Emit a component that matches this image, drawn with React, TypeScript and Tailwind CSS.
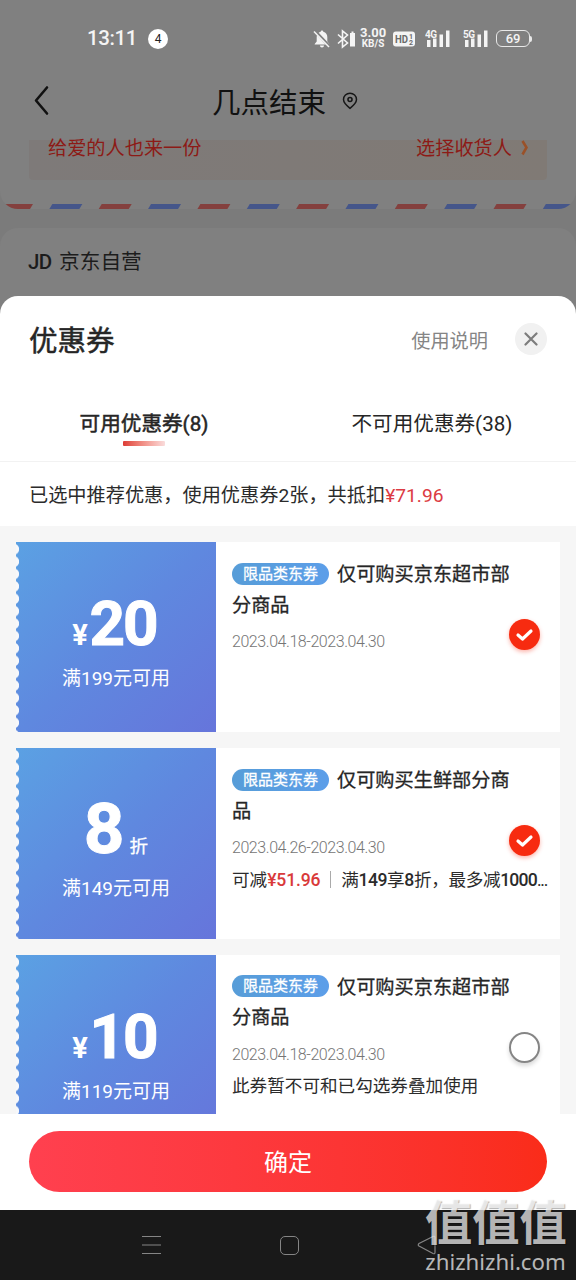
import React, { useState } from 'react';

interface Coupon {
  id: number;
  amount: string;
  kind: 'cash' | 'discount';
  condition: string;
  tag: string;
  title: [string, string];
  period: string;
  saved?: string;
  note?: React.ReactNode;
}

const coupons: Coupon[] = [
  {
    id: 1,
    amount: '20',
    kind: 'cash',
    condition: '满199元可用',
    tag: '限品类东券',
    title: ['仅可购买京东超市部', '分商品'],
    period: '2023.04.18-2023.04.30',
  },
  {
    id: 2,
    amount: '8',
    kind: 'discount',
    condition: '满149元可用',
    tag: '限品类东券',
    title: ['仅可购买生鲜部分商', '品'],
    period: '2023.04.26-2023.04.30',
    saved: '¥51.96',
    note: (
      <>
        满<b className="font-medium tracking-[-0.5px]">149</b>享<b className="font-medium">8</b>折，最多减
        <b className="font-medium tracking-[-0.8px]">1000</b>
        <span className="tracking-[-1.3px]">...</span>
      </>
    ),
  },
  {
    id: 3,
    amount: '10',
    kind: 'cash',
    condition: '满119元可用',
    tag: '限品类东券',
    title: ['仅可购买京东超市部', '分商品'],
    period: '2023.04.18-2023.04.30',
    note: '此券暂不可和已勾选券叠加使用',
  },
];

function Signal({ label }: { label: string }) {
  return (
    <svg width="25" height="20" viewBox="0 0 25 20" fill="#f4f4f4">
      <text x="0" y="8.500" fontSize="10" fontWeight="700" fontFamily="Roboto, sans-serif" textLength="12">
        {label}
      </text>
      <rect x="2" y="11" width="3.500" height="7" />
      <rect x="8" y="9.500" width="3.500" height="8.500" />
      <rect x="14.500" y="5.500" width="3.500" height="12.500" />
      <rect x="21" y="1.500" width="3.500" height="16.500" />
    </svg>
  );
}

function StatusBar() {
  return (
    <div className="flex h-[77px] items-center pl-[87px] text-[#f4f4f4]">
      <span className="text-[20.500px] font-medium tracking-[-0.4px]">13:11</span>
      <span className="ml-[11px] flex h-5 w-5 items-center justify-center rounded-full bg-white text-[12px] text-[#222]">
        4
      </span>
      <div className="ml-[145px] flex items-center">
        <svg width="18" height="20" viewBox="0 0 18 20" fill="none">
          <path
            d="M9 1.500c.9 0 1.300.6 1.300 1.300C13 3.500 14.300 5.600 14.300 8v4.500l2 2.500v.6H1.700V15l2-2.500V8C3.700 5.600 5 3.500 7.700 2.800 7.700 2.100 8.100 1.500 9 1.500zM7 16.500h4c0 1.200-.8 2-2 2s-2-.8-2-2z"
            fill="#f4f4f4"
          />
          <path d="M2 2l15 16" stroke="#808080" strokeWidth="3" />
          <path d="M1 2.500l15 15.500" stroke="#f4f4f4" strokeWidth="1.500" />
        </svg>
        <svg className="ml-[6px]" width="19" height="20" viewBox="0 0 19 20" fill="none">
          <path d="M1 5.500l9.500 8.500-5 4V2l5 4L1 14.500" stroke="#f4f4f4" strokeWidth="1.600" />
          <path d="M13 4h1.500V2.500h2V4H18v13.500h-5z" fill="#f4f4f4" />
        </svg>
        <div className="ml-[3px] flex w-[28px] flex-col items-center font-bold">
          <span className="text-[13px] leading-[11px]">3.00</span>
          <span className="text-[10px] leading-[12px]">KB/S</span>
        </div>
        <svg className="ml-[6px]" width="22" height="16" viewBox="0 0 22 16">
          <rect width="22" height="15" y=".5" rx="3" fill="#f4f4f4" />
          <g fill="#6b6b6b" fontFamily="Roboto, sans-serif" fontWeight="700">
            <text x="2" y="12" fontSize="11.500" textLength="13" lengthAdjust="spacingAndGlyphs">HD</text>
            <text x="16" y="7.500" fontSize="7">1</text>
            <text x="16" y="14" fontSize="7">2</text>
          </g>
        </svg>
        <span className="ml-[10px]">
          <Signal label="4G" />
        </span>
        <span className="ml-[13px]">
          <Signal label="5G" />
        </span>
        <div className="ml-[8px] flex h-[17px] w-[34px] items-center justify-center rounded-[6px] border-[1.5px] border-[#e8e8e8] text-[13px] font-medium">
          69
        </div>
        <span className="h-[6px] w-[2px] rounded-r-full bg-[#e8e8e8]" />
      </div>
    </div>
  );
}

function AirmailBorder() {
  const dashes = Array.from({ length: 12 }, (_, i) => i);
  return (
    <svg className="block" width="576" height="5" viewBox="0 0 576 5">
      {dashes.map((i) => (
        <path
          key={i}
          d={`M${i * 49.35 + 3} 0h30l-3 5h-30z`}
          fill={i % 2 === 0 ? '#84403e' : '#45568a'}
        />
      ))}
    </svg>
  );
}

function OrderBackdrop() {
  return (
    <div className="h-[296px] bg-[#7b7b7b]">
      <div className="h-[209px] overflow-hidden rounded-b-[18px] bg-[#808080]">
        <StatusBar />
        <div className="flex h-[49px] items-center text-[#111]">
          <svg className="mt-[-1px] ml-[33px]" width="17" height="32" viewBox="0 0 17 32" fill="none">
            <path d="M14 2.500L3 15.500l11 13" stroke="#111" strokeWidth="2.600" strokeLinecap="round" strokeLinejoin="round" />
          </svg>
          <h1 className="mt-[5px] ml-[162px] text-[28.500px] leading-[40px]">几点结束</h1>
          <svg className="mt-[-1px] ml-[16px]" width="16" height="18" viewBox="0 0 16 18" fill="none" stroke="#161616">
            <path d="M8 16.300C4.500 13.500 1.500 10.800 1.500 7.500a6.500 6.300 0 0 1 13 0c0 3.300-3 6-6.500 8.800z" strokeWidth="1.500" />
            <circle cx="8" cy="7.500" r="2" strokeWidth="1.600" />
          </svg>
        </div>
        <div className="mx-[29px] mt-[14px] flex h-[40px] justify-between rounded-b-[4px] bg-linear-to-r from-[#7e7a79] to-[#807a75] pr-[18px] pl-[19px] text-[19.200px] leading-[18px] text-[#8d1a16]">
          <span>给爱的人也来一份</span>
          <span className="flex">
            选择收货人
            <svg className="ml-[9px]" width="8" height="16" viewBox="0 0 8 16" fill="none">
              <path d="M1.500 1l4 6.500-4 7" stroke="#9a5128" strokeWidth="2.600" />
            </svg>
          </span>
        </div>
        <div className="pt-[24px]">
          <AirmailBorder />
        </div>
      </div>
      <div className="mt-[19px] flex h-[68px] items-center rounded-t-[18px] bg-[#808080] pl-[28px] text-[#1c1c1c]">
        <span className="w-[31px] text-[20.500px] font-medium tracking-[-0.6px]">JD</span>
        <span className="pt-[2px] text-[20.700px]">京东自营</span>
      </div>
    </div>
  );
}

function CheckMark({ checked }: { checked: boolean }) {
  if (!checked) {
    return (
      <span className="block h-[31px] w-[31px] rounded-full border-[2.5px] border-[#858585] bg-white shadow-[0_3px_4px_rgba(0,0,0,0.15)]" />
    );
  }
  return (
    <span className="flex h-[31px] w-[31px] items-center justify-center rounded-full bg-[#f72b10] shadow-[0_2px_4px_rgba(247,43,16,0.35)]">
      <svg width="19" height="14" viewBox="0 0 19 14" fill="none">
        <path d="M3 7l4.500 4L16 3" stroke="#fff" strokeWidth="3.200" strokeLinecap="round" strokeLinejoin="round" />
      </svg>
    </span>
  );
}

function CouponCard({ coupon, checked, onToggle }: { coupon: Coupon; checked: boolean; onToggle: () => void }) {
  return (
    <div className="flex h-[190.300px] shrink-0 bg-white" onClick={onToggle}>
      <div className="relative w-[200px] shrink-0 bg-linear-[135deg,#5ba1e3_0%,#5f88df_50%,#6675db_100%] text-center text-white">
        <div className="absolute top-[1px] bottom-0 left-0 w-[4px] bg-[radial-gradient(circle_at_-2.500px_50%,#f7f8fb_5.200px,transparent_6px)] bg-size-[4px_12.400px]" />
        {coupon.kind === 'cash' ? (
          <div className="flex h-[103px] items-baseline justify-center pt-[49px] pr-[5px] font-bold">
            <span className="w-[19px] text-[29px] leading-none">¥</span>
            <span className="text-[62px] leading-[66px] tracking-[-2px] [-webkit-text-stroke:1px_white]">{coupon.amount}</span>
          </div>
        ) : (
          <div className="flex h-[107px] items-baseline justify-center pt-[44px]">
            <span className="text-[71px] leading-[74px] font-bold [-webkit-text-stroke:1px_white]">{coupon.amount}</span>
            <span className="ml-[5px] text-[18.500px] [-webkit-text-stroke:0.3px_white]">折</span>
          </div>
        )}
        <div className="mt-[22px] text-[19px] leading-[24px]">{coupon.condition}</div>
      </div>
      <div className="min-w-0 flex-1 pt-[17px] pl-[16px]">
        <div className="text-[19.200px] leading-[30.500px] whitespace-nowrap text-[#262626]">
          <div className="flex h-[30.500px] items-center">
            <span className="mt-[-1px] mr-[8px] flex h-[22px] w-[97px] items-center justify-center rounded-full bg-linear-to-r from-[#579dd8] to-[#5c9ee9] text-[15px] leading-[20px] text-white [-webkit-text-stroke:0.3px_white]">
              {coupon.tag}
            </span>
            <span className="mt-[2px] [-webkit-text-stroke:0.3px_#262626]">{coupon.title[0]}</span>
          </div>
          <div className="mt-[1px] [-webkit-text-stroke:0.3px_#262626]">{coupon.title[1]}</div>
        </div>
        <div className="mt-[9px] flex h-[24px] items-center justify-between pr-[20px]">
          <span className="text-[16px] font-light tracking-[-0.44px] text-[#757575]">{coupon.period}</span>
          <span className="mt-[-15px]">
            <CheckMark checked={checked} />
          </span>
        </div>
        {coupon.note && (
          <div className="mt-[7.500px] flex items-center text-[17.600px] leading-[24px] whitespace-nowrap text-[#2b2b2b]">
            {coupon.saved && (
              <>
                <span>可减</span>
                <span className="font-medium tracking-[-0.2px] text-[#d93a3a]">{coupon.saved}</span>
                <span className="mx-[10px] h-[17px] w-px bg-[#aaa]" />
              </>
            )}
            <span className={coupon.saved ? 'tracking-[-0.35px]' : ''}>{coupon.note}</span>
          </div>
        )}
      </div>
    </div>
  );
}

function SystemNav() {
  return (
    <div className="relative flex h-[70px] items-center justify-between bg-[#191919] pr-[139px] pl-[141px]">
      <svg width="21" height="20" viewBox="0 0 21 20" stroke="#858585" strokeWidth="1.200">
        <path d="M1 1.500h19M1 10h19M1 18.500h19" />
      </svg>
      <span className="h-[19px] w-[19px] rounded-[5px] border border-[#858585]" />
      <svg width="20" height="22" viewBox="0 0 20 22" fill="none" stroke="#858585" strokeWidth="1.200">
        <path d="M2 9.500Q.5 11 2 12l14 7.500q2 .8 2-1V3.500q0-1.800-2-1z" />
      </svg>
      {/* site watermark */}
      <div className="absolute right-[10px] bottom-[5px] w-[141px] text-white/70">
        <div className="pb-[1px] text-[47.300px] leading-[48px] font-bold whitespace-nowrap [text-shadow:1px_1px_1px_rgba(0,0,0,0.3)]">
          值值值
        </div>
        <div className="text-center font-['Noto_Sans'] text-[22.200px] leading-[26px] whitespace-nowrap">zhizhizhi.com</div>
      </div>
    </div>
  );
}

export default function App() {
  const [selected, setSelected] = useState<number[]>([1, 2]);
  const [tab, setTab] = useState(0);

  const toggle = (id: number) => {
    setSelected((prev) => (prev.includes(id) ? prev.filter((s) => s !== id) : [...prev, id]));
  };

  return (
    <div
      className="h-[1280px] w-[576px] overflow-hidden bg-[#7b7b7b] font-[Roboto,'Noto_Sans_CJK_SC',sans-serif]"
      lang="zh-CN"
    >
      <OrderBackdrop />
      <div className="bg-[#808080]">
        <div className="flex h-[914px] flex-col overflow-hidden rounded-t-[18px] bg-white">
          <div className="flex h-[88px] shrink-0 items-center pr-[29px] pl-[29px]">
            <h2 className="flex-1 pt-[4px] text-[28.500px] text-[#262626] [-webkit-text-stroke:0.500px_#262626]">优惠券</h2>
            <span className="pt-[4px] text-[19.200px] text-[#858585]">使用说明</span>
            <button className="mt-[-2px] ml-[27px] flex h-[32px] w-[32px] items-center justify-center rounded-full bg-[#f1f1f1]">
              <svg width="14" height="14" viewBox="0 0 14 14" stroke="#7d7d7d" strokeWidth="2.200" strokeLinecap="round">
                <path d="M1.500 1.500l11 11M12.500 1.500l-11 11" />
              </svg>
            </button>
          </div>

          <div className="flex h-[78px] shrink-0 border-b border-[#f2f2f2] text-[20.600px] text-[#262626]">
            {['可用优惠券(8)', '不可用优惠券(38)'].map((label, idx) => (
              <button key={idx} onClick={() => setTab(idx)} className="flex flex-1 flex-col items-center pt-[25px]">
                <span className={tab === idx ? 'leading-[30px] [-webkit-text-stroke:0.5px_#262626]' : 'leading-[30px]'}>
                  {label}
                </span>
                {tab === idx && (
                  <span className="mt-[2px] h-[5px] w-[42px] rounded-[1px] bg-linear-to-r from-[#dd3a35] to-[#f9dcdc]" />
                )}
              </button>
            ))}
          </div>

          <div className="h-[64px] shrink-0 pl-[29px] text-[19.200px] leading-[68px] text-[#2b2b2b]">
            已选中推荐优惠，使用优惠券2张，共抵扣<span className="text-[#dc3b43]">¥71.96</span>
          </div>

          <div className="flex h-[588px] shrink-0 flex-col gap-[16px] overflow-hidden bg-[#f6f6f6] px-[16px] pt-[16px]">
            {coupons.map((c) => (
              <CouponCard key={c.id} coupon={c} checked={selected.includes(c.id)} onToggle={() => toggle(c.id)} />
            ))}
          </div>

          <div className="px-[29px] pt-[17px]">
            <button className="h-[61px] w-full rounded-full bg-linear-to-r from-[#ff404f] to-[#fa2c19] pt-[3px] text-[24px] text-white">
              确定
            </button>
          </div>
        </div>
      </div>
      <SystemNav />
    </div>
  );
}
